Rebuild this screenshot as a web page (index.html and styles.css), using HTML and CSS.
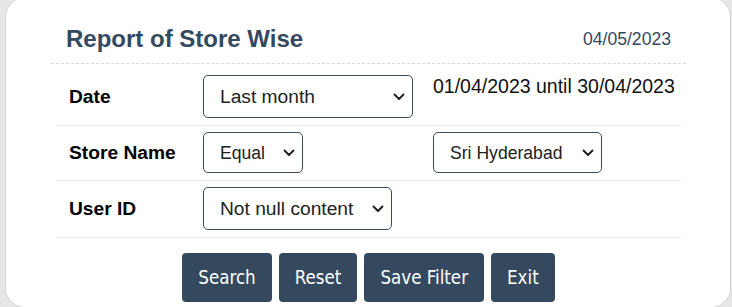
FILE: index.html
```html
<!DOCTYPE html>
<html lang="en">
<head>
  <meta charset="UTF-8">
  <meta name="viewport" content="width=device-width, initial-scale=1.0">
  <title>Report of Store Wise</title>
  <link rel="stylesheet" href="styles.css">
</head>
<body>
  <div class="card">
    <div class="report-header">
      <h1>Report of Store Wise</h1>
      <span class="today">04/05/2023</span>
    </div>

    <div class="filters">
      <div class="filter-row">
        <label class="filter-label">Date</label>
        <div class="filter-cell">
          <span class="select-wrap">
            <select class="select select-lg sel-date">
              <option>Last month</option>
            </select>
            <svg class="chevron" width="12" height="8" viewBox="0 0 12 8"><path d="M1.5 1.5 L6 6 L10.5 1.5" fill="none" stroke="#222" stroke-width="2" stroke-linecap="round" stroke-linejoin="round"/></svg>
          </span>
        </div>
        <div class="filter-cell range">01/04/2023 until 30/04/2023</div>
      </div>

      <div class="filter-row">
        <label class="filter-label">Store Name</label>
        <div class="filter-cell">
          <span class="select-wrap">
            <select class="select select-sm sel-op">
              <option>Equal</option>
            </select>
            <svg class="chevron" width="12" height="8" viewBox="0 0 12 8"><path d="M1.5 1.5 L6 6 L10.5 1.5" fill="none" stroke="#222" stroke-width="2" stroke-linecap="round" stroke-linejoin="round"/></svg>
          </span>
        </div>
        <div class="filter-cell">
          <span class="select-wrap">
            <select class="select select-sm sel-store">
              <option>Sri Hyderabad</option>
            </select>
            <svg class="chevron" width="12" height="8" viewBox="0 0 12 8"><path d="M1.5 1.5 L6 6 L10.5 1.5" fill="none" stroke="#222" stroke-width="2" stroke-linecap="round" stroke-linejoin="round"/></svg>
          </span>
        </div>
      </div>

      <div class="filter-row">
        <label class="filter-label">User ID</label>
        <div class="filter-cell">
          <span class="select-wrap">
            <select class="select select-lg sel-user">
              <option>Not null content</option>
            </select>
            <svg class="chevron" width="12" height="8" viewBox="0 0 12 8"><path d="M1.5 1.5 L6 6 L10.5 1.5" fill="none" stroke="#222" stroke-width="2" stroke-linecap="round" stroke-linejoin="round"/></svg>
          </span>
        </div>
        <div class="filter-cell"></div>
      </div>
    </div>

    <div class="actions">
      <button class="btn">Search</button>
      <button class="btn">Reset</button>
      <button class="btn">Save Filter</button>
      <button class="btn">Exit</button>
    </div>
  </div>
</body>
</html>
```

FILE: styles.css
```css
body {
  margin: 0;
  background-color: #e6e6e6;
  font-family: 'Liberation Sans', Arial, sans-serif;
  overflow: hidden;
}

.card {
  box-sizing: border-box;
  width: 726px;
  height: 311px;
  margin: -3px 0 0 5px;
  padding: 0 44px 0 45px;
  background-color: white;
  border: 1px solid #d6d6d6;
  border-radius: 20px;
}

.report-header {
  display: flex;
  justify-content: space-between;
  align-items: center;
  padding: 27px 15px 10px;
  border-bottom: 1px dashed #d8d8d8;
}

.report-header h1 {
  margin: 0;
  font-size: 24px;
  font-weight: bold;
  color: #34495e;
}

.today {
  font-size: 17.6px;
  color: #34495e;
}

.filters {
  margin: 0 5px;
  padding-top: 5px;
}

.filter-row {
  display: grid;
  grid-template-columns: 134px 230px 1fr;
  padding: 6px 0 7px 13px;
  border-bottom: 1px solid #eeeeee;
}

.filter-label {
  align-self: center;
  font-size: 19.2px;
  font-weight: bold;
  color: #000;
}

.filter-cell {
  display: flex;
  align-items: flex-start;
}

.range {
  font-size: 19.5px;
  color: #111;
  line-height: 22px;
}

.select-wrap {
  position: relative;
  display: inline-block;
}

.select {
  appearance: none;
  -webkit-appearance: none;
  box-sizing: border-box;
  display: block;
  margin: 0;
  padding: 0 30px 0 16px;
  font-family: inherit;
  color: #222;
  background-color: white;
  border: 1px solid #3b4b5c;
  border-radius: 5px;
}

.select-lg {
  height: 43px;
  font-size: 19.2px;
}

.select-sm {
  height: 41px;
  font-size: 17.6px;
}

.sel-date { width: 210px; }
.sel-op { width: 100px; }
.sel-store { width: 169px; }
.sel-user { width: 189px; }

.chevron {
  position: absolute;
  right: 8px;
  top: 50%;
  transform: translateY(-50%);
  pointer-events: none;
}

.actions {
  display: flex;
  justify-content: center;
  gap: 7px;
  margin-top: 15px;
}

.btn {
  height: 49px;
  padding: 0 16px;
  font-family: 'DejaVu Sans Condensed', 'DejaVu Sans', sans-serif;
  font-size: 18.6px;
  color: white;
  background-color: #34495e;
  border: none;
  border-radius: 4px;
  cursor: pointer;
}

.btn:hover {
  opacity: 0.9;
}
```
